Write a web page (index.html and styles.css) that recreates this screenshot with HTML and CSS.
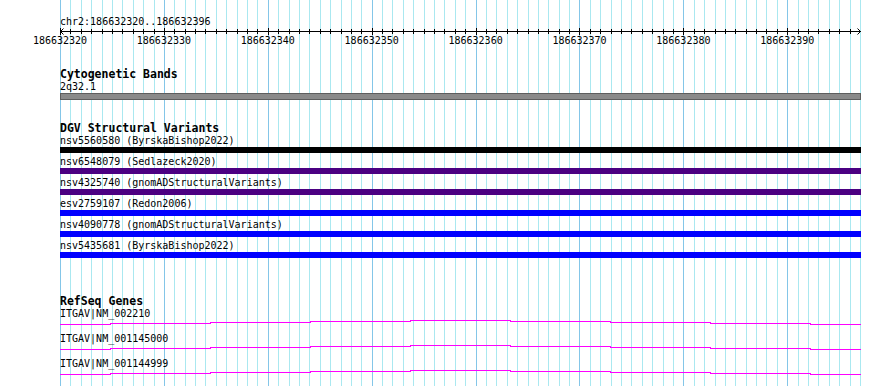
FILE: index.html
```html
<!DOCTYPE html>
<html lang="en">

<head>
    <meta charset="UTF-8">
    <meta name="viewport" content="width=device-width, initial-scale=1.0">
    <title>chr2:186632320..186632396</title>
    <link rel="stylesheet" href="styles.css">
</head>

<body>
<div class="panel">
    <!-- one column per base, 186632320..186632396 -->
    <div class="grid">
        <span></span><span></span><span></span><span></span><span></span><span></span><span></span><span></span><span></span><span></span>
        <span></span><span></span><span></span><span></span><span></span><span></span><span></span><span></span><span></span><span></span>
        <span></span><span></span><span></span><span></span><span></span><span></span><span></span><span></span><span></span><span></span>
        <span></span><span></span><span></span><span></span><span></span><span></span><span></span><span></span><span></span><span></span>
        <span></span><span></span><span></span><span></span><span></span><span></span><span></span><span></span><span></span><span></span>
        <span></span><span></span><span></span><span></span><span></span><span></span><span></span><span></span><span></span><span></span>
        <span></span><span></span><span></span><span></span><span></span><span></span><span></span><span></span><span></span><span></span>
        <span></span><span></span><span></span><span></span><span></span><span></span><span></span>
    </div>

    <div class="tracks">
        <div class="ruler">
            <div class="ruler-name">chr2:186632320..186632396</div>
            <svg class="axis" width="801" height="6" viewBox="0 0 801 6">
                <path d="M0 3.5H801" />
                <path d="M3.5 0.5L0.5 3.5L3.5 6.5" />
                <path d="M797.5 0.5L800.5 3.5L797.5 6.5" />
            </svg>
            <div class="ruler-labels">
                <span>186632320</span>
                <span>186632330</span>
                <span>186632340</span>
                <span>186632350</span>
                <span>186632360</span>
                <span>186632370</span>
                <span>186632380</span>
                <span>186632390</span>
            </div>
        </div>

        <section class="track cyto">
            <h3 class="track-title">Cytogenetic Bands</h3>
            <div class="label">2q32.1</div>
            <div class="band-bar"></div>
        </section>

        <section class="track dgv">
            <h3 class="track-title">DGV Structural Variants</h3>
            <div class="variant">
                <div class="label">nsv5560580 (ByrskaBishop2022)</div>
                <div class="bar black"></div>
            </div>
            <div class="variant">
                <div class="label">nsv6548079 (Sedlazeck2020)</div>
                <div class="bar purple"></div>
            </div>
            <div class="variant">
                <div class="label">nsv4325740 (gnomADStructuralVariants)</div>
                <div class="bar purple"></div>
            </div>
            <div class="variant">
                <div class="label">esv2759107 (Redon2006)</div>
                <div class="bar blue"></div>
            </div>
            <div class="variant">
                <div class="label">nsv4090778 (gnomADStructuralVariants)</div>
                <div class="bar blue"></div>
            </div>
            <div class="variant">
                <div class="label">nsv5435681 (ByrskaBishop2022)</div>
                <div class="bar blue"></div>
            </div>
        </section>

        <section class="track genes">
            <h3 class="track-title">RefSeq Genes</h3>
            <div class="gene">
                <div class="label">ITGAV|NM_002210</div>
                <svg class="gene-line" width="801" height="12" viewBox="0 0 801 12">
                    <path d="M0 4.5H50V3.5H150V2.5H250V1.5H350V0.5H450V1.5H550V2.5H650V3.5H750V4.5H801" />
                </svg>
            </div>
            <div class="gene">
                <div class="label">ITGAV|NM_001145000</div>
                <svg class="gene-line" width="801" height="12" viewBox="0 0 801 12">
                    <path d="M0 4.5H50V3.5H150V2.5H250V1.5H350V0.5H450V1.5H550V2.5H650V3.5H750V4.5H801" />
                </svg>
            </div>
            <div class="gene">
                <div class="label">ITGAV|NM_001144999</div>
                <svg class="gene-line" width="801" height="12" viewBox="0 0 801 12">
                    <path d="M0 4.5H50V3.5H150V2.5H250V1.5H350V0.5H450V1.5H550V2.5H650V3.5H750V4.5H801" />
                </svg>
            </div>
        </section>
    </div>
</div>
</body>

</html>
```

FILE: styles.css
```css
/* genome browser panel */
body {
    margin: 0;
    padding: 0;
    background-color: #ffffff;
    font-family: "DejaVu Sans Mono", monospace;
    color: #000000;
}

.panel {
    position: relative;
    width: 890px;
    height: 386px;
    overflow: hidden;
}

/* base grid behind the tracks */
.grid {
    position: absolute;
    left: 60px;
    top: 0;
    width: 801px;
    height: 386px;
    box-sizing: border-box;
    border-right: 1px solid #aae8f0;
    display: grid;
    grid-template-columns: repeat(77, 1fr);
}

.grid span {
    position: relative;
    min-width: 0;
    border-left: 1px solid #aae8f0;
}

.grid span:nth-child(10n+1) {
    border-left-color: #84c6e8;
}

/* ruler ticks sit on the grid lines */
.grid span::before {
    content: '';
    position: absolute;
    left: -1px;
    top: 29px;
    width: 1px;
    height: 5px;
    background-color: #000000;
}

.grid span:nth-child(10n+1)::before {
    top: 28px;
    height: 7px;
}

.tracks {
    position: relative;
    padding-left: 60px;
}

.ruler-name {
    margin-top: 15px;
    font-size: 10px;
    line-height: 13px;
}

.axis {
    display: block;
    overflow: visible;
}

.axis path {
    fill: none;
    stroke: #000000;
    stroke-width: 1;
}

.ruler-labels {
    width: 800px;
    display: grid;
    grid-template-columns: repeat(7, 10fr) 7fr;
    font-size: 10px;
    line-height: 13px;
}

.ruler-labels span {
    justify-self: start;
    transform: translateX(-50%);
}

.track-title {
    margin: 0;
    font-size: 11.5px;
    line-height: 12px;
    font-weight: bold;
}

.label {
    font-size: 10px;
    line-height: 13px;
    white-space: nowrap;
}

.cyto {
    margin-top: 21px;
}

.band-bar {
    width: 801px;
    height: 7px;
    box-sizing: border-box;
    background-color: #8a8a8a;
    border: 1px solid #5e5e5e;
}

.dgv {
    margin-top: 22px;
}

.bar {
    width: 801px;
    height: 6px;
    margin-bottom: 2px;
}

.bar.black {
    background-color: #000000;
}

.bar.purple {
    background-color: #4b0082;
}

.bar.blue {
    background-color: #0000ff;
}

.genes {
    margin-top: 37px;
}

.gene-line {
    display: block;
}

.gene-line path {
    fill: none;
    stroke: #ff00ff;
    stroke-width: 1;
    shape-rendering: crispEdges;
}
```
